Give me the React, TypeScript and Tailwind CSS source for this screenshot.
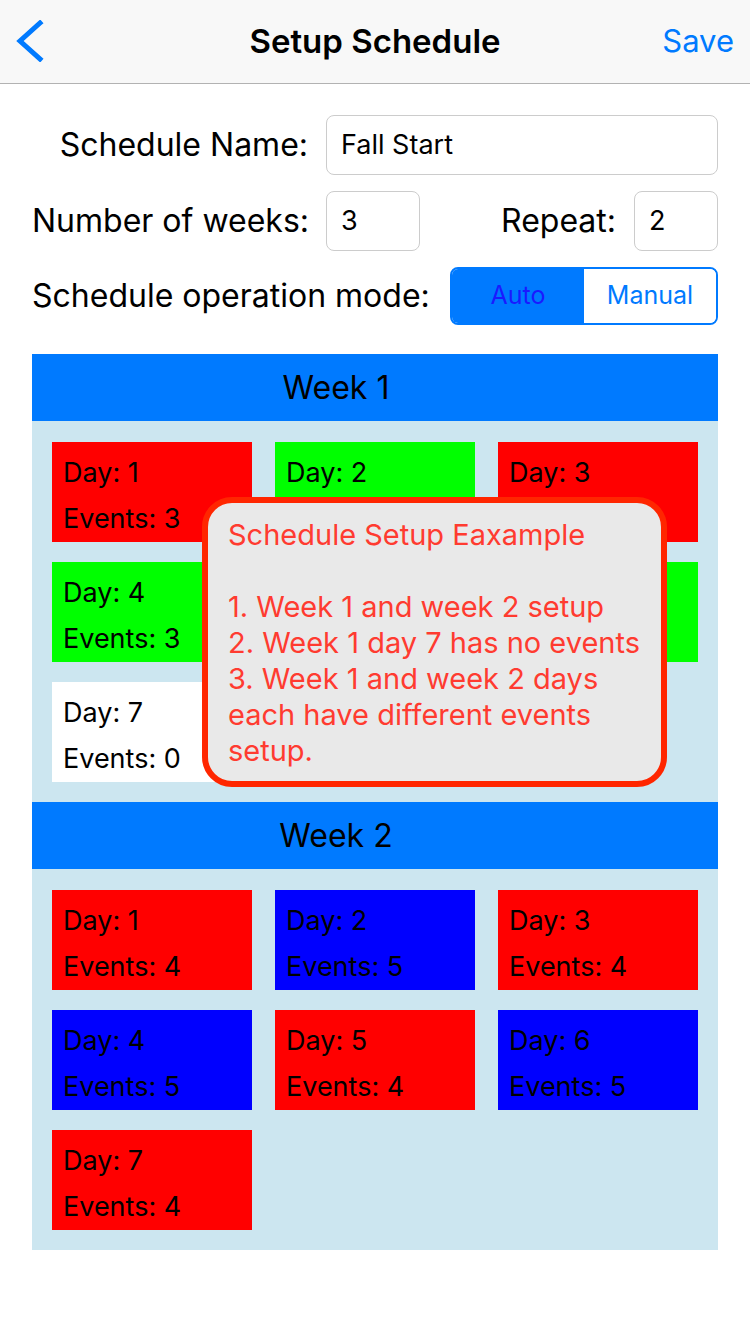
const week1 = [
  { day: 1, events: 3, color: "bg-[#ff0000]" },
  { day: 2, events: 3, color: "bg-[#00ff00]" },
  { day: 3, events: 3, color: "bg-[#ff0000]" },
  { day: 4, events: 3, color: "bg-[#00ff00]" },
  { day: 5, events: 3, color: "bg-[#ff0000]" },
  { day: 6, events: 3, color: "bg-[#00ff00]" },
  { day: 7, events: 0, color: "bg-white" },
];

const week2 = [
  { day: 1, events: 4, color: "bg-[#ff0000]" },
  { day: 2, events: 5, color: "bg-[#0000ff]" },
  { day: 3, events: 4, color: "bg-[#ff0000]" },
  { day: 4, events: 5, color: "bg-[#0000ff]" },
  { day: 5, events: 4, color: "bg-[#ff0000]" },
  { day: 6, events: 5, color: "bg-[#0000ff]" },
  { day: 7, events: 4, color: "bg-[#ff0000]" },
];

const DayCell = ({ day }: { day: (typeof week1)[0] }) => (
  <div
    className={`${day.color} h-[100px] flex flex-col gap-[14px] pt-[15px] pl-[11px] text-[27px] leading-[32px] text-black`}
  >
    <span>Day: {day.day}</span>
    <span>Events: {day.events}</span>
  </div>
);

const Week = ({
  title,
  days,
  children,
}: {
  title: string;
  days: typeof week1;
  children?: React.ReactNode;
}) => (
  <div className="relative">
    <div className="h-[67px] bg-[#007aff] flex items-center justify-center pr-[78px] text-[32px] text-black">
      {title}
    </div>
    <div className="bg-[#cce6f0] grid grid-cols-[200px_200px_200px] gap-x-[23px] gap-y-[20px] pt-[21px] pb-[20px] px-[20px]">
      {days.map((d) => (
        <DayCell key={d.day} day={d} />
      ))}
    </div>
    {children}
  </div>
);

export default function App() {
  return (
    <div className="w-[750px] min-h-[1334px] bg-white font-['Inter',sans-serif] text-black">
      {/* nav bar */}
      <div className="h-[84px] bg-[#f8f8f8] border-b border-[#b2b2b2] grid grid-cols-[1fr_auto_1fr] items-center px-[14px]">
        <svg width="30" height="42" viewBox="0 0 30 42" className="mt-[-2px]">
          <polyline
            points="26,3 6,21 26,39"
            fill="none"
            stroke="#007aff"
            strokeWidth="5"
            strokeLinecap="square"
          />
        </svg>
        <div className="text-[33px] font-semibold">Setup Schedule</div>
        <div className="justify-self-end text-[31px] text-[#007aff] pr-[2px]">Save</div>
      </div>

      {/* form */}
      <div className="px-[32px] pt-[31px] flex flex-col">
        <div className="flex items-center">
          <div className="w-[276px] text-right text-[32px]">Schedule Name:</div>
          <div className="ml-[18px] w-[392px] h-[60px] rounded-[8px] border border-[#cccccc] flex items-center pl-[14px] text-[27px]">
            Fall Start
          </div>
        </div>
        <div className="flex items-center mt-[16px]">
          <div className="w-[276px] text-right text-[32px] whitespace-nowrap">Number of weeks:</div>
          <div className="ml-[18px] w-[94px] h-[60px] rounded-[8px] border border-[#cccccc] flex items-center pl-[14px] text-[27px]">
            3
          </div>
          <div className="flex-1 text-right text-[32px]">Repeat:</div>
          <div className="ml-[18px] w-[84px] h-[60px] rounded-[8px] border border-[#cccccc] flex items-center pl-[14px] text-[27px]">
            2
          </div>
        </div>
        <div className="flex items-center mt-[16px]">
          <div className="flex-1 text-[32px]">Schedule operation mode:</div>
          <div className="w-[268px] h-[58px] rounded-[8px] border-2 border-[#007aff] flex overflow-hidden text-[25px]">
            <div className="w-[132px] bg-[#007aff] text-[#1a1aff] flex items-center justify-center">
              Auto
            </div>
            <div className="flex-1 bg-white text-[#007aff] flex items-center justify-center">
              Manual
            </div>
          </div>
        </div>

        {/* weeks */}
        <div className="mt-[29px] flex flex-col">
          <Week title="Week 1" days={week1}>
            <div className="absolute left-[170px] top-[143px] w-[465px] h-[290px] rounded-[30px] border-[6px] border-[#ff2600] bg-[#e9e9e9] pl-[20px] pr-[16px] pt-[14px] text-[29px] leading-[36px] text-[#ff3b30]">
              <p>Schedule Setup Eaxample</p>
              <p>&nbsp;</p>
              <p className="whitespace-nowrap">1. Week 1 and week 2 setup</p>
              <p className="whitespace-nowrap">2. Week 1 day 7 has no events</p>
              <p>
                3. Week 1 and week 2 days
                <br />
                each have different events setup.
              </p>
            </div>
          </Week>
          <Week title="Week 2" days={week2} />
        </div>
      </div>
    </div>
  );
}
